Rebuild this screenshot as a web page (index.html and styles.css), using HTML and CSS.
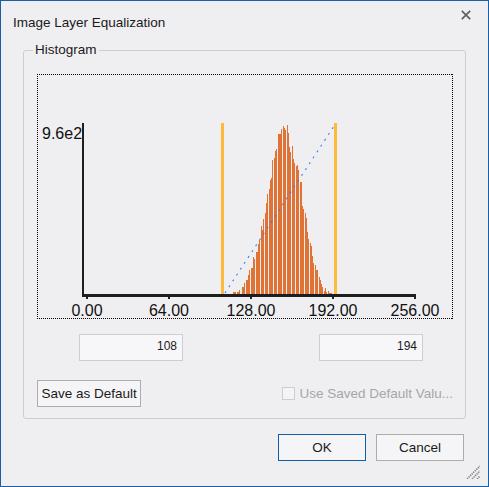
FILE: index.html
```html
<!DOCTYPE html>
<html>
<head>
<meta charset="utf-8">
<link rel="stylesheet" href="styles.css">
</head>
<body>
<div class="window">
  <div class="titlebar">
    <span class="title">Image Layer Equalization</span>
    <svg class="close" width="10" height="10" viewBox="0 0 10 10"><path d="M0.8 0.8L9.2 9.2M9.2 0.8L0.8 9.2" stroke="#5f5f5f" stroke-width="1.7" fill="none"/></svg>
  </div>
  <fieldset class="group">
    <legend>Histogram</legend>
    <svg class="chart" width="416" height="245" viewBox="37 74 416 245">
      <path d="M37 74.5H453M37 318.5H453M37.5 74V319M452.5 74V319" fill="none" stroke="#000" stroke-width="1" stroke-dasharray="1 1" shape-rendering="crispEdges"/>
      <g fill="#e07236" shape-rendering="crispEdges">
        <rect x="233" y="292" width="3" height="2"/>
        <rect x="237" y="292" width="2" height="2"/>
        <rect x="239" y="290" width="1" height="4"/>
        <rect x="242" y="287" width="2" height="7"/>
        <rect x="244" y="283" width="1" height="11"/>
        <rect x="246" y="280" width="2" height="14"/>
        <rect x="248" y="275" width="1" height="19"/>
        <rect x="249" y="270" width="1" height="24"/>
        <rect x="251" y="268" width="2" height="26"/>
        <rect x="253" y="257" width="1" height="37"/>
        <rect x="254" y="259" width="1" height="35"/>
        <rect x="256" y="252" width="2" height="42"/>
        <rect x="258" y="244" width="1" height="50"/>
        <rect x="259" y="240" width="1" height="54"/>
        <rect x="261" y="226" width="1" height="68"/>
        <rect x="262" y="230" width="1" height="64"/>
        <rect x="263" y="219" width="1" height="75"/>
        <rect x="265" y="213" width="1" height="81"/>
        <rect x="266" y="203" width="1" height="91"/>
        <rect x="267" y="194" width="1" height="100"/>
        <rect x="269" y="189" width="1" height="105"/>
        <rect x="270" y="180" width="1" height="114"/>
        <rect x="271" y="178" width="1" height="116"/>
        <rect x="272" y="160" width="1" height="134"/>
        <rect x="274" y="158" width="1" height="136"/>
        <rect x="275" y="151" width="1" height="143"/>
        <rect x="276" y="149" width="1" height="145"/>
        <rect x="278" y="134" width="3" height="160"/>
        <rect x="281" y="129" width="1" height="165"/>
        <rect x="283" y="126" width="1" height="168"/>
        <rect x="284" y="128" width="1" height="166"/>
        <rect x="285" y="130" width="1" height="164"/>
        <rect x="287" y="125" width="1" height="169"/>
        <rect x="288" y="133" width="1" height="161"/>
        <rect x="289" y="147" width="1" height="147"/>
        <rect x="290" y="152" width="1" height="142"/>
        <rect x="292" y="146" width="1" height="148"/>
        <rect x="293" y="159" width="1" height="135"/>
        <rect x="294" y="163" width="1" height="131"/>
        <rect x="296" y="166" width="1" height="128"/>
        <rect x="297" y="165" width="1" height="129"/>
        <rect x="298" y="170" width="1" height="124"/>
        <rect x="300" y="182" width="2" height="112"/>
        <rect x="302" y="206" width="1" height="88"/>
        <rect x="303" y="209" width="1" height="85"/>
        <rect x="305" y="213" width="1" height="81"/>
        <rect x="306" y="218" width="1" height="76"/>
        <rect x="307" y="232" width="1" height="62"/>
        <rect x="308" y="239" width="1" height="55"/>
        <rect x="310" y="243" width="1" height="51"/>
        <rect x="311" y="246" width="1" height="48"/>
        <rect x="312" y="256" width="1" height="38"/>
        <rect x="313" y="263" width="1" height="31"/>
        <rect x="315" y="265" width="1" height="29"/>
        <rect x="316" y="270" width="2" height="24"/>
        <rect x="319" y="277" width="1" height="17"/>
        <rect x="320" y="280" width="1" height="14"/>
        <rect x="321" y="284" width="1" height="10"/>
        <rect x="322" y="287" width="1" height="7"/>
        <rect x="324" y="291" width="1" height="3"/>
        <rect x="325" y="288" width="1" height="6"/>
        <rect x="326" y="292" width="1" height="2"/>
        <rect x="328" y="291" width="1" height="3"/>
        <rect x="329" y="293" width="3" height="1"/>
      </g>
      <g fill="#ffba3c" shape-rendering="crispEdges">
        <rect x="221" y="123" width="3" height="171"/>
        <rect x="334" y="123" width="3" height="171"/>
      </g>
      <line x1="225" y1="293" x2="334" y2="126" stroke="#3b7cf3" stroke-width="1.1" stroke-dasharray="2 5"/>
      <g fill="#1e1e1e" shape-rendering="crispEdges">
        <rect x="82" y="123" width="2" height="174"/>
        <rect x="82" y="294" width="334" height="3"/>
        <rect x="86" y="297" width="2" height="2"/>
        <rect x="168" y="297" width="2" height="2"/>
        <rect x="250" y="297" width="2" height="2"/>
        <rect x="332" y="297" width="2" height="2"/>
        <rect x="414" y="297" width="2" height="2"/>
      </g>
      <g class="axis-text">
        <text x="42" y="139">9.6e2</text>
        <text x="87" y="316" text-anchor="middle">0.00</text>
        <text x="169" y="316" text-anchor="middle">64.00</text>
        <text x="251" y="316" text-anchor="middle">128.00</text>
        <text x="333" y="316" text-anchor="middle">192.00</text>
        <text x="415" y="316" text-anchor="middle">256.00</text>
      </g>
    </svg>
    <div class="range-row">
      <div class="field">108</div>
      <div class="field">194</div>
    </div>
    <div class="option-row">
      <button class="btn save">Save as Default</button>
      <label class="check"><span class="box"></span>Use Saved Default Valu...</label>
    </div>
  </fieldset>
  <div class="actions">
    <button class="btn primary">OK</button>
    <button class="btn">Cancel</button>
  </div>
  <svg class="grip" width="14" height="14" viewBox="0 0 14 14"><path d="M1 14L14 1M6 14L14 6M11 14L14 11" stroke="#8a8a8a" stroke-width="1.6" stroke-dasharray="1.4 0.8" fill="none"/></svg>
</div>
</body>
</html>
```
FILE: styles.css
```css
html, body {
  margin: 0;
  padding: 0;
  background: #efeff2;
}

.window {
  position: relative;
  width: 489px;
  height: 487px;
  box-sizing: border-box;
  border: 1px solid #1a5fa6;
  background: #efeff2;
  font-family: "Liberation Sans", Arial, sans-serif;
  font-size: 13.5px;
  color: #1a1a1a;
}

.titlebar {
  display: flex;
  justify-content: space-between;
  align-items: flex-start;
  height: 41px;
  padding: 0 17px 0 12px;
}

.title {
  padding-top: 14px;
  line-height: 16px;
}

.close {
  margin-top: 9px;
  display: block;
}

.group {
  margin: 0 0 0 22px;
  width: 443px;
  box-sizing: border-box;
  min-width: 0;
  padding: 0 12px 11px 9px;
  border: 1px solid #ccccd6;
  border-radius: 3px;
}

.group legend {
  padding: 0 2px;
  margin: 0;
  line-height: 16px;
}

.chart {
  display: block;
  margin: 16px 0 0 4px;
  font-family: "Liberation Sans", Arial, sans-serif;
}

.axis-text text {
  font-family: "Liberation Sans", Arial, sans-serif;
  font-size: 16px;
  fill: #111;
}

.range-row {
  display: flex;
  gap: 136px;
  margin-top: 15px;
  padding-left: 46px;
}

.field {
  width: 104px;
  height: 27px;
  box-sizing: border-box;
  border: 1px solid #cdcdd5;
  background: #f7f7f9;
  font-size: 12px;
  line-height: 14px;
  padding: 4px 5px 0 0;
  text-align: right;
}

.option-row {
  display: flex;
  align-items: center;
  margin-top: 19px;
  padding-left: 4px;
}

.btn {
  font: inherit;
  color: #1a1a1a;
  height: 27px;
  box-sizing: border-box;
  border: 1px solid #adadad;
  background: #f5f5f7;
  padding: 0;
  margin: 0;
}

.save {
  width: 105px;
}

.check {
  display: flex;
  align-items: center;
  gap: 4px;
  margin-left: 141px;
  color: #a6a6a6;
  white-space: nowrap;
}

.box {
  width: 13px;
  height: 13px;
  box-sizing: border-box;
  border: 1px solid #cdcdd3;
  background: #f4f4f6;
}

.actions {
  display: flex;
  justify-content: flex-end;
  gap: 10px;
  margin-top: 15px;
  padding-right: 24px;
}

.actions .btn {
  width: 88px;
}

.btn.primary {
  border-color: #0f5fa8;
}

.grip {
  position: absolute;
  right: 8px;
  bottom: 7px;
}
```
